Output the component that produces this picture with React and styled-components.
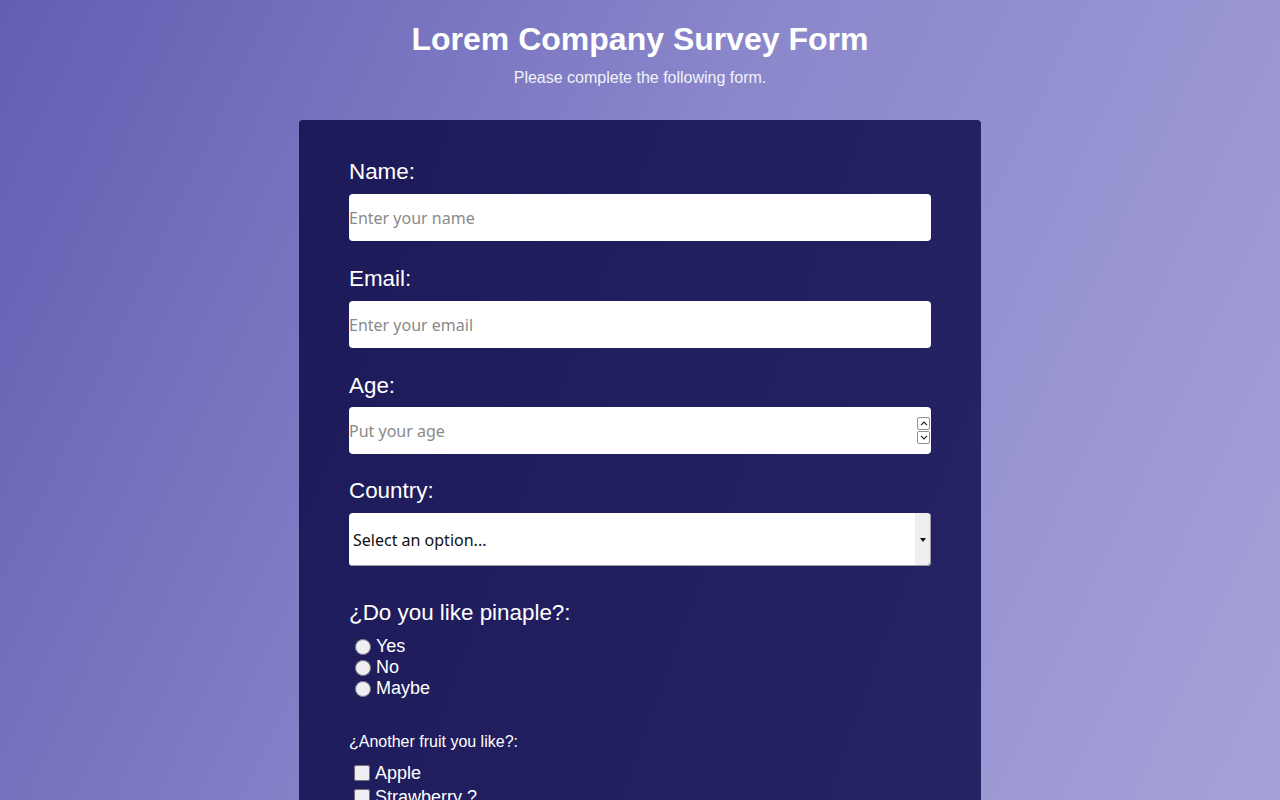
import styled, { createGlobalStyle } from 'styled-components'

const GlobalStyle = createGlobalStyle`
  html, body {
    margin: 0;
    padding: 0;
  }
  body {
    font-family: "Liberation Sans", Arial, sans-serif;
  }
`

const Page = styled.div`
  min-height: 100vh;
  background: linear-gradient(115deg, #625eb2 0%, #8a87cb 45%, #a8a4db 100%);
  padding: 21px 0 40px;
  box-sizing: border-box;
`

const Title = styled.h1`
  margin: 0;
  text-align: center;
  color: #fff;
  font-size: 32px;
  font-weight: 700;
  line-height: 37px;
`

const Subtitle = styled.p`
  margin: 11px 0 0;
  text-align: center;
  color: #f2f2f8;
  font-size: 16px;
  line-height: 18px;
`

const Card = styled.form`
  width: 682px;
  margin: 33px auto 0;
  padding: 39px 50px 40px;
  box-sizing: border-box;
  border-radius: 4px;
  background: linear-gradient(110deg, #1d1a5a 0%, #222060 60%, #262464 100%);
  color: #fff;
`

const Field = styled.div`
  display: flex;
  flex-direction: column;
  margin-bottom: ${p => p.$gap || 25}px;
`

const Label = styled.label`
  font-size: ${p => p.$size || 22.4}px;
  line-height: 25px;
  margin-bottom: ${p => p.$below || 10}px;
`

const Input = styled.input`
  height: 47px;
  width: 100%;
  box-sizing: border-box;
  border: none;
  border-radius: 4px;
  padding: 0 1px 0 0;
  background: #fff;
  font-family: "Noto Sans", "Open Sans", sans-serif;
  font-size: 16px;
  color: #222;
  outline: none;

  &::placeholder {
    color: #8a8a8a;
  }

  &::-webkit-inner-spin-button,
  &::-webkit-outer-spin-button {
    -webkit-appearance: none;
    margin: 0;
  }
`

const NumberWrap = styled.div`
  position: relative;
`

const Spinner = styled.div`
  position: absolute;
  right: 1px;
  top: 10px;
  display: flex;
  flex-direction: column;
  pointer-events: none;
`

const SpinBtn = styled.span`
  display: flex;
  align-items: center;
  justify-content: center;
  width: 11px;
  height: 11px;
  border: 1px solid #8f8f95;
  border-radius: 2px;
  background: #fff;
  margin-bottom: 1px;
`

const SelectWrap = styled.div`
  position: relative;

  &::after {
    content: "";
    position: absolute;
    right: 5px;
    top: 25px;
    border-left: 3px solid transparent;
    border-right: 3px solid transparent;
    border-top: 4px solid #111;
    pointer-events: none;
  }
`

const Select = styled.select`
  appearance: none;
  -webkit-appearance: none;
  display: block;
  height: 53px;
  width: 100%;
  box-sizing: border-box;
  border: none;
  border-radius: 4px;
  padding: 0 0 0 4px;
  background: linear-gradient(to right, #fff calc(100% - 16px), #efeff1 calc(100% - 16px));
  box-shadow: inset -1px -1px 0 #9a9aa0;
  font-family: "Noto Sans", "Open Sans", sans-serif;
  font-size: 16px;
  color: #111;
`

const Choice = styled.label`
  display: flex;
  align-items: center;
  font-size: 18px;
  line-height: 21px;
  margin-left: 6px;
`

const Box = styled.input`
  width: 16px;
  height: 16px;
  margin: 0 5px 0 0;
  opacity: 0.93;
`

const CheckRow = styled(Choice)`
  line-height: 24px;
  margin-left: 5px;
`

const Chevron = ({ up }) => (
  <svg width="8" height="5" viewBox="0 0 8 5" fill="none" stroke="#222" strokeWidth="1.2">
    <path d={up ? 'M1 4.2 L4 1.2 L7 4.2' : 'M1 0.8 L4 3.8 L7 0.8'} />
  </svg>
)

export default function App() {
  return (
    <>
      <GlobalStyle />
      <Page>
        <Title>Lorem Company Survey Form</Title>
        <Subtitle>Please complete the following form.</Subtitle>
        <Card>
          <Field>
            <Label htmlFor="name">Name:</Label>
            <Input id="name" type="text" placeholder="Enter your name" />
          </Field>
          <Field $gap={25}>
            <Label htmlFor="email">Email:</Label>
            <Input id="email" type="email" placeholder="Enter your email" />
          </Field>
          <Field $gap={24}>
            <Label htmlFor="age" $below={9}>Age:</Label>
            <NumberWrap>
              <Input id="age" type="number" placeholder="Put your age" />
              <Spinner>
                <SpinBtn><Chevron up /></SpinBtn>
                <SpinBtn><Chevron /></SpinBtn>
              </Spinner>
            </NumberWrap>
          </Field>
          <Field $gap={34}>
            <Label htmlFor="country">Country:</Label>
            <SelectWrap>
              <Select id="country" defaultValue="">
                <option value="" disabled>Select an option...</option>
                <option>Spain</option>
                <option>Mexico</option>
                <option>Argentina</option>
              </Select>
            </SelectWrap>
          </Field>
          <Field $gap={30}>
            <Label $below={11}>¿Do you like pinaple?:</Label>
            <Choice><Box type="radio" name="pinaple" />Yes</Choice>
            <Choice><Box type="radio" name="pinaple" />No</Choice>
            <Choice><Box type="radio" name="pinaple" />Maybe</Choice>
          </Field>
          <Field>
            <Label $size={16} $below={7}>¿Another fruit you like?:</Label>
            <CheckRow><Box type="checkbox" />Apple</CheckRow>
            <CheckRow><Box type="checkbox" />Strawberry ?</CheckRow>
            <CheckRow><Box type="checkbox" />Banana</CheckRow>
            <CheckRow><Box type="checkbox" />Orange</CheckRow>
          </Field>
        </Card>
      </Page>
    </>
  )
}
